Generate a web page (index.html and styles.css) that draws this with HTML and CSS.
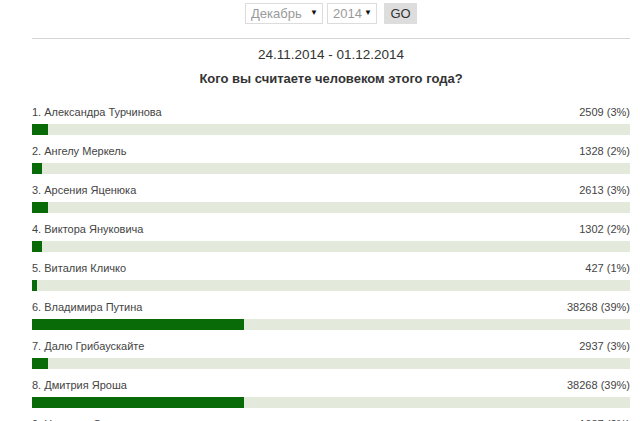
FILE: index.html
```html
<!DOCTYPE html>
<html lang="ru">
<head>
    <meta charset="UTF-8">
    <title>Человек года</title>
    <link rel="stylesheet" href="styles.css">
</head>
<body>
    <div class="poll">
        <!-- Period picker -->
        <form class="period" onsubmit="return false">
            <span class="pick month">
                <select>
                    <option>Декабрь</option>
                </select>
                <span class="arrow">&#9660;</span>
            </span>
            <span class="pick year">
                <select>
                    <option>2014</option>
                </select>
                <span class="arrow">&#9660;</span>
            </span>
            <button type="submit" class="go">GO</button>
        </form>

        <div class="divider"></div>

        <div class="dates">24.11.2014 - 01.12.2014</div>
        <h2 class="question">Кого вы считаете человеком этого года?</h2>

        <ul class="results">
            <li>
                <div class="row-head"><span>1. Александра Турчинова</span><span>2509 (3%)</span></div>
                <div class="track"><div class="fill" style="width:16px"></div></div>
            </li>
            <li>
                <div class="row-head"><span>2. Ангелу Меркель</span><span>1328 (2%)</span></div>
                <div class="track"><div class="fill" style="width:10px"></div></div>
            </li>
            <li>
                <div class="row-head"><span>3. Арсения Яценюка</span><span>2613 (3%)</span></div>
                <div class="track"><div class="fill" style="width:16px"></div></div>
            </li>
            <li>
                <div class="row-head"><span>4. Виктора Януковича</span><span>1302 (2%)</span></div>
                <div class="track"><div class="fill" style="width:10px"></div></div>
            </li>
            <li>
                <div class="row-head"><span>5. Виталия Кличко</span><span>427 (1%)</span></div>
                <div class="track"><div class="fill" style="width:5px"></div></div>
            </li>
            <li>
                <div class="row-head"><span>6. Владимира Путина</span><span>38268 (39%)</span></div>
                <div class="track"><div class="fill" style="width:212px"></div></div>
            </li>
            <li>
                <div class="row-head"><span>7. Далю Грибаускайте</span><span>2937 (3%)</span></div>
                <div class="track"><div class="fill" style="width:16px"></div></div>
            </li>
            <li>
                <div class="row-head"><span>8. Дмитрия Яроша</span><span>38268 (39%)</span></div>
                <div class="track"><div class="fill" style="width:212px"></div></div>
            </li>
            <li>
                <div class="row-head"><span>9. Надежду Савченко</span><span>1687 (2%)</span></div>
                <div class="track"><div class="fill" style="width:10px"></div></div>
            </li>
        </ul>
    </div>
</body>
</html>
```

FILE: styles.css
```css
body {
    margin: 0;
    background: #ffffff;
    font-family: 'Liberation Sans', Arial, sans-serif;
    color: #333333;
}

.poll {
    width: 598px;
    margin-left: 32px;
}

/* month / year selector */
.period {
    display: flex;
    justify-content: center;
    gap: 4px;
    padding-top: 3px;
    margin: 0;
    height: 21px;
}
.pick {
    position: relative;
    display: inline-block;
    height: 21px;
}
.pick select {
    appearance: none;
    -webkit-appearance: none;
    height: 21px;
    border: 1px solid #dcdcdc;
    background: #ffffff;
    color: #9a9a9a;
    font-family: 'Liberation Sans', Arial, sans-serif;
    font-size: 13px;
    padding: 0 0 0 5px;
    border-radius: 0;
    margin: 0;
}
.month select {
    width: 78px;
}
.year select {
    width: 50px;
}
.pick .arrow {
    position: absolute;
    right: 5px;
    top: 5px;
    font-size: 8px;
    color: #111111;
    pointer-events: none;
}
.go {
    margin-left: 3px;
    width: 33px;
    height: 21px;
    border: none;
    background: #dddddd;
    color: #333333;
    font-family: 'Liberation Sans', Arial, sans-serif;
    font-size: 13px;
    padding: 0;
    cursor: pointer;
}

.divider {
    margin-top: 14px;
    height: 1px;
    background: #d4d4d4;
}

.dates {
    margin-top: 8px;
    text-align: center;
    font-size: 13.5px;
    line-height: 16px;
    color: #333333;
}
.question {
    margin: 8px 0 0 0;
    text-align: center;
    font-size: 13px;
    line-height: 16px;
    font-weight: bold;
    color: #333333;
}

.results {
    list-style: none;
    margin: 17px 0 0 0;
    padding: 0;
}
.results li {
    margin-bottom: 8px;
}
.row-head {
    display: flex;
    justify-content: space-between;
    font-size: 11px;
    line-height: 16px;
    color: #444444;
}
.track {
    margin-top: 4px;
    height: 11px;
    background: #e4eadb;
}
.fill {
    height: 11px;
    background: #086b08;
}
```
